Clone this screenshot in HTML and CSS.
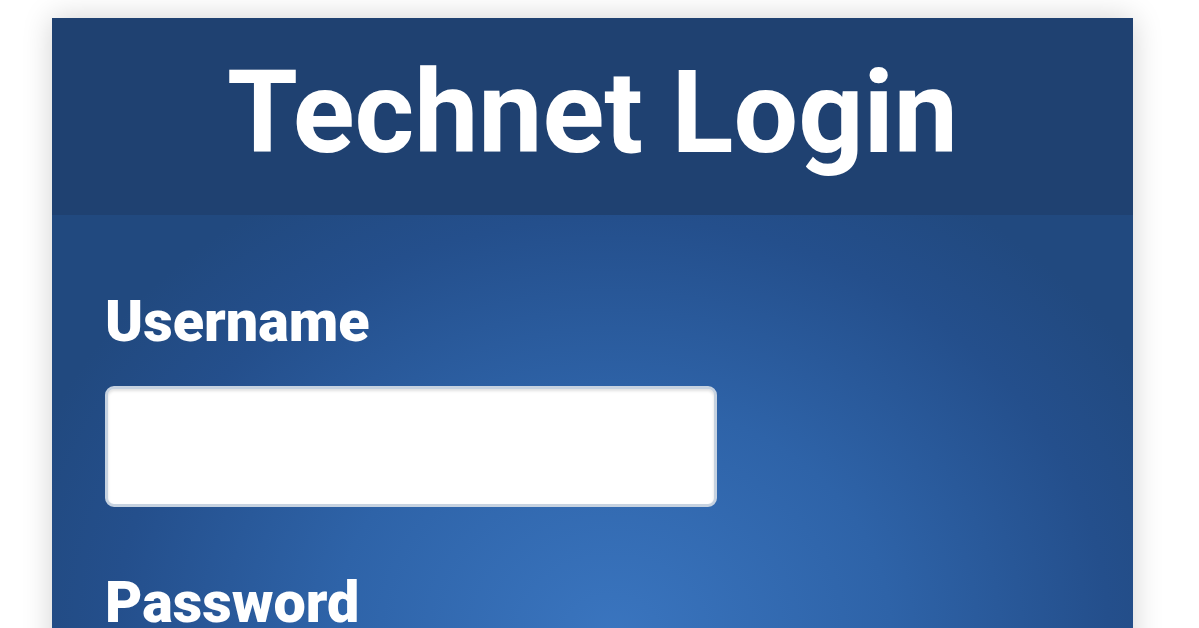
FILE: index.html
```html
<!DOCTYPE html>
<html>
<head>
<meta charset="utf-8">
<link rel="stylesheet" href="styles.css">
</head>
<body>
<div class="page">
  <div class="card">
    <div class="header"><h1 class="title">Technet Login</h1></div>
    <div class="body">
      <label class="label">Username</label>
      <div class="input"></div>
      <label class="label label-pw">Password</label>
    </div>
  </div>
</div>
</body>
</html>
```
FILE: styles.css
```css
html, body { margin: 0; padding: 0; background: #ffffff; overflow: hidden; }
.page { width: 1199px; height: 628px; padding-top: 18px; padding-left: 52px; box-sizing: border-box; }
.card {
  width: 1081px; height: 700px;
  box-shadow: 0 0 28px rgba(0,0,0,0.18);
  font-family: Roboto, "Liberation Sans", sans-serif;
}
.header {
  height: 197px; background: #1f4171;
  display: flex; align-items: center; justify-content: center;
}
.title {
  margin: 0; color: #ffffff; font-weight: 700; font-size: 114.5px; line-height: 1;
  padding-bottom: 6px;
}
.body {
  height: 503px;
  background: radial-gradient(ellipse 620px 520px at 560px 420px, #3a75bf 0%, #2e63a8 45%, #244f8c 80%, #21497f 100%);
  padding: 77px 0 0 53px; box-sizing: border-box;
}
.label { display: block; color: #ffffff; font-weight: 900; font-size: 57.5px; line-height: 60px; }
.input {
  margin-top: 34px; width: 612px; height: 121px; background: #ffffff;
  border-radius: 9px; box-sizing: border-box;
  border: 3px solid #c6d2e0;
  box-shadow: inset 0 2px 3px rgba(0,0,0,0.12);
}
.label-pw { margin-top: 66px; }
```
